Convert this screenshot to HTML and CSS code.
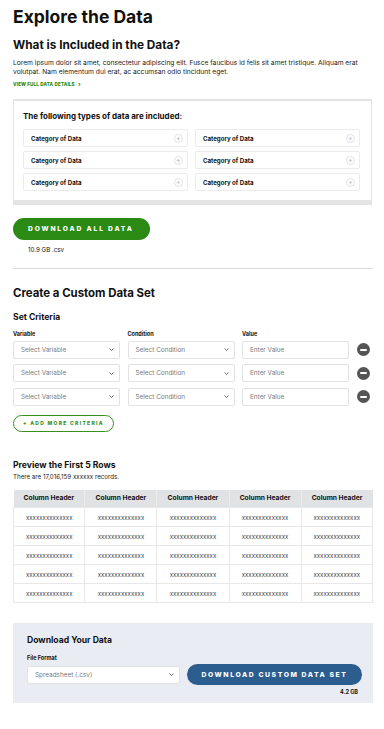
FILE: index.html
```html
<!DOCTYPE html>
<html lang="en">
<head>
<meta charset="utf-8">
<title>Explore the Data</title>
<link rel="stylesheet" href="styles.css">
</head>
<body>
<main class="page">
  <h1 class="title">Explore the Data</h1>
  <h2 class="subtitle">What is Included in the Data?</h2>
  <p class="intro">Lorem ipsum dolor sit amet, consectetur adipiscing elit. Fusce faucibus id felis sit amet tristique. Aliquam erat volutpat. Nam elementum dui erat, ac accumsan odio tincidunt eget.</p>
  <a class="details-link" href="#">VIEW FULL DATA DETAILS <span class="chev">›</span></a>

  <section class="types-box">
    <h3 class="types-title">The following types of data are included:</h3>
    <div class="cat-grid">
      <div class="cat"><span>Category of Data</span><span class="plus">+</span></div>
      <div class="cat"><span>Category of Data</span><span class="plus">+</span></div>
      <div class="cat"><span>Category of Data</span><span class="plus">+</span></div>
      <div class="cat"><span>Category of Data</span><span class="plus">+</span></div>
      <div class="cat"><span>Category of Data</span><span class="plus">+</span></div>
      <div class="cat"><span>Category of Data</span><span class="plus">+</span></div>
    </div>
  </section>

  <div class="download-all">
    <button class="btn btn-green">DOWNLOAD ALL DATA</button>
    <div class="size-note">10.9 GB .csv</div>
  </div>

  <hr class="divider">

  <h2 class="section-title">Create a Custom Data Set</h2>
  <h3 class="small-title criteria-title">Set Criteria</h3>

  <div class="criteria">
    <div class="label">Variable</div>
    <div class="label">Condition</div>
    <div class="label">Value</div>
    <div></div>

    <div class="field select">Select Variable<svg class="caret" viewBox="0 0 10 6"><path d="M1 1l4 4 4-4" fill="none" stroke="#333" stroke-width="1.4"/></svg></div>
    <div class="field select">Select Condition<svg class="caret" viewBox="0 0 10 6"><path d="M1 1l4 4 4-4" fill="none" stroke="#333" stroke-width="1.4"/></svg></div>
    <div class="field">Enter Value</div>
    <span class="minus"></span>

    <div class="field select">Select Variable<svg class="caret" viewBox="0 0 10 6"><path d="M1 1l4 4 4-4" fill="none" stroke="#333" stroke-width="1.4"/></svg></div>
    <div class="field select">Select Condition<svg class="caret" viewBox="0 0 10 6"><path d="M1 1l4 4 4-4" fill="none" stroke="#333" stroke-width="1.4"/></svg></div>
    <div class="field">Enter Value</div>
    <span class="minus"></span>

    <div class="field select">Select Variable<svg class="caret" viewBox="0 0 10 6"><path d="M1 1l4 4 4-4" fill="none" stroke="#333" stroke-width="1.4"/></svg></div>
    <div class="field select">Select Condition<svg class="caret" viewBox="0 0 10 6"><path d="M1 1l4 4 4-4" fill="none" stroke="#333" stroke-width="1.4"/></svg></div>
    <div class="field">Enter Value</div>
    <span class="minus"></span>
  </div>

  <button class="btn btn-outline">+ ADD MORE CRITERIA</button>

  <h3 class="small-title preview-title">Preview the First 5 Rows</h3>
  <p class="records">There are 17,016,159 xxxxxx records.</p>

  <table class="preview">
    <thead>
      <tr><th>Column Header</th><th>Column Header</th><th>Column Header</th><th>Column Header</th><th>Column Header</th></tr>
    </thead>
    <tbody>
      <tr><td>xxxxxxxxxxxxxx</td><td>xxxxxxxxxxxxxx</td><td>xxxxxxxxxxxxxx</td><td>xxxxxxxxxxxxxx</td><td>xxxxxxxxxxxxxx</td></tr>
      <tr><td>xxxxxxxxxxxxxx</td><td>xxxxxxxxxxxxxx</td><td>xxxxxxxxxxxxxx</td><td>xxxxxxxxxxxxxx</td><td>xxxxxxxxxxxxxx</td></tr>
      <tr><td>xxxxxxxxxxxxxx</td><td>xxxxxxxxxxxxxx</td><td>xxxxxxxxxxxxxx</td><td>xxxxxxxxxxxxxx</td><td>xxxxxxxxxxxxxx</td></tr>
      <tr><td>xxxxxxxxxxxxxx</td><td>xxxxxxxxxxxxxx</td><td>xxxxxxxxxxxxxx</td><td>xxxxxxxxxxxxxx</td><td>xxxxxxxxxxxxxx</td></tr>
      <tr><td>xxxxxxxxxxxxxx</td><td>xxxxxxxxxxxxxx</td><td>xxxxxxxxxxxxxx</td><td>xxxxxxxxxxxxxx</td><td>xxxxxxxxxxxxxx</td></tr>
    </tbody>
  </table>

  <section class="download-panel">
    <h3 class="small-title">Download Your Data</h3>
    <div class="label">File Format</div>
    <div class="panel-row">
      <div class="field select format">Spreadsheet (.csv)<svg class="caret" viewBox="0 0 10 6"><path d="M1 1l4 4 4-4" fill="none" stroke="#333" stroke-width="1.4"/></svg></div>
      <button class="btn btn-blue">DOWNLOAD CUSTOM DATA SET</button>
    </div>
    <div class="panel-size">4.2 GB</div>
  </section>
</main>
</body>
</html>
```

FILE: styles.css
```css
* { box-sizing: border-box; }
html, body { margin: 0; padding: 0; background: #fff; }
body {
  font-family: Inter, "Noto Sans", "DejaVu Sans", sans-serif;
  color: #111;
}
.page {
  width: 384px;
  padding: 7px 11px 30px 13px;
}
.title {
  font-size: 17.5px;
  font-weight: 700;
  line-height: 20px;
  margin: 0 0 10px;
}
.subtitle {
  font-size: 11.8px;
  font-weight: 700;
  line-height: 16px;
  margin: 0 0 6px;
}
.intro {
  font-size: 6.7px;
  line-height: 9px;
  margin: 0 0 4px;
  color: #222;
}
.details-link {
  display: block;
  font-size: 4.6px;
  line-height: 6px;
  font-weight: 800;
  color: #2a8a12;
  text-decoration: none;
  letter-spacing: 0.15px;
  margin-bottom: 11px;
}
.details-link .chev { font-size: 6px; margin-left: 2px; }

.types-box {
  border: 1px solid #e4e4e4;
  border-top-width: 2px;
  border-bottom: 5px solid #e4e4e4;
  padding: 10px 11px 9px 9px;
  margin-right: 1px;
}
.types-title {
  font-size: 8px;
  font-weight: 700;
  margin: 0 0 8px;
  line-height: 10px;
}
.cat-grid {
  display: grid;
  grid-template-columns: 1fr 1fr;
  column-gap: 7px;
  row-gap: 4px;
}
.cat {
  display: flex;
  align-items: center;
  justify-content: space-between;
  height: 18px;
  border: 1px solid #ececec;
  border-radius: 2px;
  padding: 0 4px 0 7px;
  font-size: 6.1px;
  font-weight: 700;
}
.plus {
  width: 9px;
  height: 9px;
  border: 1px solid #e2e2e2;
  border-radius: 50%;
  display: flex;
  align-items: center;
  justify-content: center;
  font-size: 8px;
  font-weight: 400;
  color: #bbb;
  line-height: 1;
}

.download-all { margin-top: 13px; }
.btn {
  display: block;
  font-family: inherit;
  font-weight: 800;
  border-radius: 999px;
  cursor: pointer;
}
.btn-green {
  background: #2b8a14;
  color: #fff;
  border: 0;
  width: 137px;
  height: 22px;
  font-size: 6.7px;
  letter-spacing: 1.85px;
  text-align: left;
  padding: 0 0 0 15px;
}
.size-note {
  font-size: 6.2px;
  margin: 5.5px 0 0 15px;
  line-height: 7px;
}
.divider {
  border: 0;
  border-top: 1px solid #dadada;
  margin: 15px 0 17px;
}
.section-title {
  font-size: 11.4px;
  font-weight: 700;
  line-height: 14px;
  margin: 0 0 12px;
}
.small-title {
  font-size: 8.6px;
  font-weight: 700;
  line-height: 10px;
  margin: 0 0 6px;
}
.criteria-title { margin-bottom: 9px; }
.criteria {
  display: grid;
  grid-template-columns: 107px 107px 107px 14px;
  column-gap: 7.5px;
  row-gap: 5.5px;
  align-items: center;
}
.criteria .label { margin-bottom: -1.5px; }
.label {
  font-size: 5.5px;
  font-weight: 700;
  line-height: 6px;
}
.field {
  height: 18px;
  border: 1px solid #e2e2e2;
  border-radius: 2px;
  background: #fff;
  display: flex;
  align-items: center;
  justify-content: space-between;
  padding: 0 5px 0 7px;
  font-size: 6.4px;
  color: #7a7a7a;
}
.caret { width: 5px; height: 3px; }
.minus {
  width: 13px;
  height: 13px;
  border-radius: 50%;
  background: #555;
  position: relative;
  justify-self: start;
}
.minus::after {
  content: "";
  position: absolute;
  left: 3px;
  right: 3px;
  top: 5.5px;
  height: 2px;
  background: #fff;
  border-radius: 1px;
}
.btn-outline {
  margin-top: 9px;
  background: #fff;
  border: 1px solid #3a8f23;
  color: #3a8f23;
  height: 17px;
  width: 101px;
  font-size: 5px;
  letter-spacing: 1.3px;
  padding: 0;
}
.preview-title { margin-top: 28px; margin-bottom: 3px; }
.records {
  font-size: 6.2px;
  margin: 0 0 10px;
  color: #222;
  line-height: 7px;
}
.preview {
  width: 360px;
  border-collapse: collapse;
}
.preview th {
  background: #e1e2e4;
  font-size: 6.7px;
  font-weight: 700;
  height: 18px;
  border-left: 1px solid #ececec;
  padding: 0 4px;
}
.preview th:first-child { border-left: 0; }
.preview td {
  font-size: 6.1px;
  color: #444;
  text-align: center;
  height: 19px;
  border: 1px solid #e8e8e8;
  padding: 0 4px;
}
.download-panel {
  margin-top: 20px;
  width: 360px;
  background: #e9edf3;
  padding: 12px 11px 8px 14px;
}
.download-panel .small-title { margin-bottom: 10px; }
.panel-row {
  display: flex;
  align-items: center;
  gap: 7px;
  margin-top: 3px;
}
.format { width: 153px; }
.btn-blue {
  background: #2b5d8e;
  color: #fff;
  border: 0;
  width: 175px;
  height: 21px;
  font-size: 6.8px;
  letter-spacing: 1.6px;
  padding: 0;
}
.panel-size {
  text-align: right;
  font-size: 5.5px;
  line-height: 6px;
  font-weight: 700;
  margin-top: 4px;
  padding-right: 4px;
}
```
